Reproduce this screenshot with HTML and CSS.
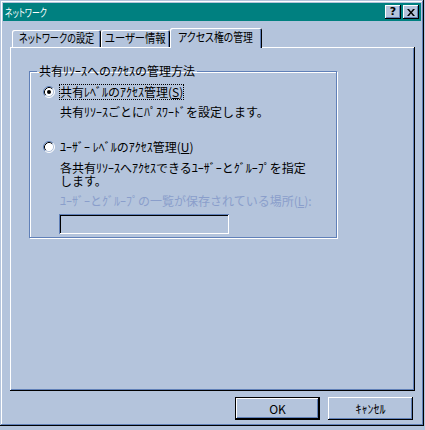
FILE: index.html
```html
<!DOCTYPE html>
<html lang="ja">
<head>
<meta charset="utf-8">
<title>ネットワーク</title>
<link rel="stylesheet" href="styles.css">
</head>
<body>
<div class="window">
  <div class="titlebar">
    <span class="title"><span class="sq">ネットワーク</span></span>
    <div class="tbtns">
      <span class="tbtn help">?</span>
      <span class="tbtn close"><svg width="8" height="7" viewBox="0 0 8 7"><path d="M0 0h2l2 2.5 2-2.5h2L5 3.5 8 7H6L4 4.5 2 7H0l3-3.5z" fill="#000"/></svg></span>
    </div>
  </div>
  <div class="content">
    <div class="tabs">
      <div class="tab t1"><span class="sq">ネットワークの設定</span></div>
      <div class="tab t2"><span class="sq">ユーザー情報</span></div>
      <div class="tab t3 sel"><span class="sq">アクセス権の管理</span></div>
    </div>
    <div class="panel">
      <fieldset class="group">
        <legend>共有ﾘｿｰｽへのｱｸｾｽの管理方法</legend>
        <div class="opt">
          <svg class="radio" width="12" height="12" viewBox="0 0 12 12">
            <circle cx="6" cy="6" r="5" fill="#fff"/>
            <path d="M2.11 9.89A5.5 5.5 0 0 1 9.89 2.11" fill="none" stroke="#6080b8"/>
            <path d="M9.89 2.11A5.5 5.5 0 0 1 2.11 9.89" fill="none" stroke="#fff"/>
            <path d="M2.82 9.18A4.5 4.5 0 0 1 9.18 2.82" fill="none" stroke="#000"/>
            <path d="M9.18 2.82A4.5 4.5 0 0 1 2.82 9.18" fill="none" stroke="#b4c4dc"/>
            <circle cx="6" cy="6" r="2" fill="#000"/>
          </svg>
          <span class="lbl focus">共有ﾚﾍﾞﾙのｱｸｾｽ管理(<u>S</u>)</span>
        </div>
        <p class="desc d1">共有ﾘｿｰｽごとにﾊﾟｽﾜｰﾄﾞを設定します。</p>
        <div class="opt o2">
          <svg class="radio" width="12" height="12" viewBox="0 0 12 12">
            <circle cx="6" cy="6" r="5" fill="#fff"/>
            <path d="M2.11 9.89A5.5 5.5 0 0 1 9.89 2.11" fill="none" stroke="#6080b8"/>
            <path d="M9.89 2.11A5.5 5.5 0 0 1 2.11 9.89" fill="none" stroke="#fff"/>
            <path d="M2.82 9.18A4.5 4.5 0 0 1 9.18 2.82" fill="none" stroke="#000"/>
            <path d="M9.18 2.82A4.5 4.5 0 0 1 2.82 9.18" fill="none" stroke="#b4c4dc"/>
          </svg>
          <span class="lbl">ﾕｰｻﾞｰ ﾚﾍﾞﾙのｱｸｾｽ管理(<u>U</u>)</span>
        </div>
        <p class="desc d2">各共有ﾘｿｰｽへｱｸｾｽできるﾕｰｻﾞｰとｸﾞﾙｰﾌﾟを指定<br>します。</p>
        <p class="desc dis">ﾕｰｻﾞｰとｸﾞﾙｰﾌﾟの一覧が保存されている場所(<u>L</u>):</p>
        <div class="field"></div>
      </fieldset>
    </div>
    <div class="buttons">
      <div class="btn default">OK</div>
      <div class="btn">ｷｬﾝｾﾙ</div>
    </div>
  </div>
</div>
</body>
</html>
```

FILE: styles.css
```css
* { box-sizing: border-box; }
html, body {
  margin: 0;
  background: #b4c4dc;
}
body {
  font-family: "Noto Sans CJK JP", sans-serif;
  font-size: 12px;
  color: #000;
}
.window {
  width: 424px;
  height: 426px;
  padding: 3px;
  background: #b4c4dc;
  box-shadow: inset -1px -1px #000, inset 1px 1px #b4c4dc, inset -2px -2px #6080b8, inset 2px 2px #fff;
  display: flex;
  flex-direction: column;
}
.titlebar {
  height: 18px;
  background: #008080;
  color: #fff;
  display: flex;
  align-items: center;
  justify-content: space-between;
  padding: 0 2px 0 2px;
}
.title {
  line-height: 18px;
  font-size: 11px;
  font-feature-settings: "palt";
  white-space: nowrap;
}
.title .sq {
  display: inline-block;
  transform: scaleX(0.72);
  transform-origin: left center;
}
.sq {
  display: inline-block;
}
.tbtns {
  display: flex;
  gap: 2px;
}
.tbtn {
  width: 16px;
  height: 14px;
  background: #b4c4dc;
  box-shadow: inset -1px -1px #000, inset 1px 1px #fff, inset -2px -2px #6080b8;
  display: flex;
  align-items: center;
  justify-content: center;
  color: #000;
}
.help {
  font-family: "DejaVu Sans", sans-serif;
  font-weight: bold;
  font-size: 11px;
  line-height: 14px;
}
.content {
  padding-top: 7px;
  display: flex;
  flex-direction: column;
}
.tabs {
  display: flex;
  align-items: flex-end;
  height: 19px;
  margin-left: 7px;
  position: relative;
  z-index: 1;
}
.tab {
  height: 17px;
  line-height: 16px;
  text-align: center;
  background: #b4c4dc;
  border-radius: 2px 2px 0 0;
  box-shadow: inset 1px 1px #fff, inset -1px 0 #000, inset -2px 0 #6080b8;
  font-feature-settings: "palt";
  white-space: nowrap;
  display: flex;
  justify-content: center;
}
.t1 { margin-left: 2px; width: 89px; }
.t2 { width: 69px; }
.t3 { width: 92px; }
.t1 .sq { transform: scaleX(0.76); }
.t2 .sq { transform: scaleX(0.86); }
.t3 .sq { transform: scaleX(0.82); }
.tab.sel {
  height: 20px;
  margin-bottom: -1px;
  line-height: 18px;
}
.panel {
  margin-left: 7px;
  width: 405px;
  height: 344px;
  padding: 16px 0 0 19px;
  box-shadow: inset -1px -1px #000, inset 1px 1px #fff, inset -2px -2px #6080b8;
}
.group {
  width: 308px;
  margin: 0;
  padding: 5px 0 3px 0;
  border: 1px solid #6080b8;
  box-shadow: 1px 1px 0 #fff, inset 1px 1px 0 #fff;
  min-inline-size: 0;
}
.group legend {
  margin-left: 7px;
  padding: 0 2px;
  line-height: 16px;
}
.opt {
  display: flex;
  align-items: center;
  gap: 4px;
  height: 16px;
  margin-left: 13px;
}
.radio { display: block; flex: none; }
.lbl {
  line-height: 14px;
  border: 1px dotted transparent;
  white-space: nowrap;
}
.lbl.focus { border-color: #000; }
.desc {
  margin: 0 0 0 30px;
  line-height: 13px;
  white-space: nowrap;
}
.d1 { margin-top: 5px; }
.o2 { margin-top: 21px; }
.d2 { margin-top: 6px; }
.dis { margin-top: 7px; color: #8a9ecb; }
.field {
  margin: 7px 0 0 29px;
  width: 170px;
  height: 20px;
  box-shadow: inset 1px 1px #6080b8, inset -1px -1px #fff, inset 2px 2px #000, inset -2px -2px #b4c4dc;
}
.buttons {
  display: flex;
  justify-content: flex-end;
  gap: 8px;
  margin-top: 6px;
  padding-right: 8px;
}
.btn {
  width: 85px;
  height: 23px;
  line-height: 23px;
  text-align: center;
  box-shadow: inset -1px -1px #000, inset 1px 1px #fff, inset -2px -2px #6080b8;
}
.btn.default {
  border: 1px solid #000;
  line-height: 21px;
}
```
